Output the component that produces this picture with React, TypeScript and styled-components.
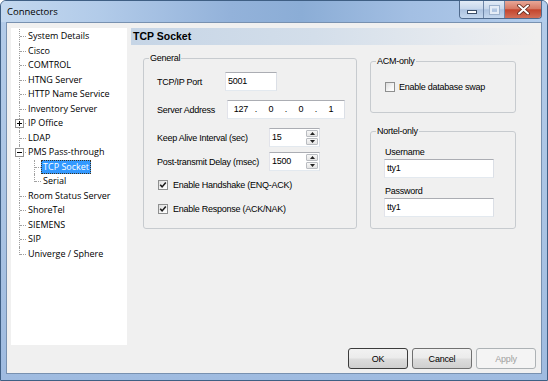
import styled, { createGlobalStyle } from 'styled-components'

const GlobalStyle = createGlobalStyle`
  html, body {
    margin: 0;
    padding: 0;
    background: #ffffff;
  }
  body {
    font-family: 'Liberation Sans', Arial, sans-serif;
  }
  * {
    box-sizing: border-box;
  }
`

interface ITreeNode {
  label: string
  toggle?: 'plus' | 'minus'
  selected?: boolean
  children?: ITreeNode[]
}

const tree: ITreeNode[] = [
  { label: 'System Details' },
  { label: 'Cisco' },
  { label: 'COMTROL' },
  { label: 'HTNG Server' },
  { label: 'HTTP Name Service' },
  { label: 'Inventory Server' },
  { label: 'IP Office', toggle: 'plus' },
  { label: 'LDAP' },
  {
    label: 'PMS Pass-through',
    toggle: 'minus',
    children: [{ label: 'TCP Socket', selected: true }, { label: 'Serial' }],
  },
  { label: 'Room Status Server' },
  { label: 'ShoreTel' },
  { label: 'SIEMENS' },
  { label: 'SIP' },
  { label: 'Univerge / Sphere' },
]

function TreeNodes({ nodes, nested }: { nodes: ITreeNode[]; nested?: boolean }) {
  return (
    <TreeList $nested={nested}>
      {nodes.map((node, index) => (
        <TreeItem key={node.label} $last={index === nodes.length - 1}>
          {node.toggle && <Toggle $plus={node.toggle === 'plus'} />}
          <TreeRow>
            <TreeLabel $selected={node.selected}>{node.label}</TreeLabel>
          </TreeRow>
          {node.children && <TreeNodes nodes={node.children} nested />}
        </TreeItem>
      ))}
    </TreeList>
  )
}

function CheckBox({ checked }: { checked?: boolean }) {
  return (
    <Box>
      {checked && (
        <svg width="8" height="8" viewBox="0 0 8 8">
          <path d="M1.2 3.8 L3.1 5.9 L6.8 1.6" fill="none" stroke="#1c1c1c" strokeWidth="1.6" />
        </svg>
      )}
    </Box>
  )
}

function Spin({ value }: { value: string }) {
  return (
    <SpinBox>
      <span>{value}</span>
      <SpinArrows>
        <SpinButton>
          <svg width="5" height="3" viewBox="0 0 5 3">
            <path d="M0 3 L2.5 0 L5 3 Z" fill="#222" />
          </svg>
        </SpinButton>
        <SpinButton>
          <svg width="5" height="3" viewBox="0 0 5 3">
            <path d="M0 0 L2.5 3 L5 0 Z" fill="#222" />
          </svg>
        </SpinButton>
      </SpinArrows>
    </SpinBox>
  )
}

export default function App() {
  return (
    <>
      <GlobalStyle />
      <Window>
        <TitleBar>
          <Title>Connectors</Title>
          <Caption>
            <CaptionButton $width={23}>
              <MinGlyph />
            </CaptionButton>
            <CaptionButton $width={21}>
              <MaxGlyph />
            </CaptionButton>
            <CaptionButton $width={37} $close>
              <svg width="13" height="11" viewBox="0 0 13 11">
                <path
                  d="M2 1.5 L11 9.5 M11 1.5 L2 9.5"
                  stroke="#5a2418"
                  strokeWidth="3.6"
                  strokeLinecap="round"
                />
                <path d="M2 1.5 L11 9.5 M11 1.5 L2 9.5" stroke="#ffffff" strokeWidth="2" strokeLinecap="round" />
              </svg>
            </CaptionButton>
          </Caption>
        </TitleBar>
        <Client>
          <Body>
            <Tree>
              <TreeNodes nodes={tree} />
            </Tree>
            <Panel>
              <Header>TCP Socket</Header>
              <Content>
                <Group $width={214}>
                  <Legend>General</Legend>
                  <GroupInner $pad={8}>
                    <FieldRow $top={8}>
                      <Label $width={68}>TCP/IP Port</Label>
                      <TextBox $width={52}>5001</TextBox>
                    </FieldRow>
                    <FieldRow $top={9}>
                      <Label $width={70}>Server Address</Label>
                      <IpBox>
                        <IpPart>127</IpPart>
                        <IpDot>.</IpDot>
                        <IpPart>0</IpPart>
                        <IpDot>.</IpDot>
                        <IpPart>0</IpPart>
                        <IpDot>.</IpDot>
                        <IpPart>1</IpPart>
                      </IpBox>
                    </FieldRow>
                    <FieldRow $top={9}>
                      <Label $width={112}>Keep Alive Interval (sec)</Label>
                      <Spin value="15" />
                    </FieldRow>
                    <FieldRow $top={5}>
                      <Label $width={112}>Post-transmit Delay (msec)</Label>
                      <Spin value="1500" />
                    </FieldRow>
                    <CheckRow $top={8} $indent={1}>
                      <CheckBox checked />
                      <span>Enable Handshake (ENQ-ACK)</span>
                    </CheckRow>
                    <CheckRow $top={12} $indent={1}>
                      <CheckBox checked />
                      <span>Enable Response (ACK/NAK)</span>
                    </CheckRow>
                  </GroupInner>
                </Group>
                <SideColumn>
                  <Group $width={146} $bottom={19}>
                    <Legend>ACM-only</Legend>
                    <GroupInner $pad={9}>
                      <CheckRow $top={14} $gap={4}>
                        <CheckBox />
                        <span>Enable database swap</span>
                      </CheckRow>
                    </GroupInner>
                  </Group>
                  <Group $width={146} $bottom={11} $top={12}>
                    <Legend>Nortel-only</Legend>
                    <GroupInner $pad={8}>
                      <StackLabel $top={9}>Username</StackLabel>
                      <TextBox $width={110} $top={1}>
                        tty1
                      </TextBox>
                      <StackLabel $top={7}>Password</StackLabel>
                      <TextBox $width={110} $top={1}>
                        tty1
                      </TextBox>
                    </GroupInner>
                  </Group>
                </SideColumn>
              </Content>
            </Panel>
          </Body>
          <ButtonRow>
            <Button $default>OK</Button>
            <Button>Cancel</Button>
            <Button disabled>Apply</Button>
          </ButtonRow>
        </Client>
      </Window>
    </>
  )
}

const Window = styled.div`
  width: 548px;
  height: 381px;
  display: flex;
  flex-direction: column;
  border: 1px solid #3f5f84;
  border-radius: 6px 6px 0 0;
  background: linear-gradient(180deg, #b4cce9 0%, #a9c3e3 60%, #9fbbe0 100%);
  overflow: hidden;
`

const TitleBar = styled.div`
  height: 21px;
  display: flex;
  justify-content: space-between;
  align-items: flex-start;
  padding-left: 6px;
  background: linear-gradient(
    90deg,
    #c3d8ef 0%,
    #b2cbe9 18%,
    #93b2da 42%,
    #8badd6 55%,
    #a3bfe3 75%,
    #b3cdec 100%
  );
`

const Title = styled.span`
  font-family: 'Open Sans', 'Noto Sans', sans-serif;
  font-size: 9.5px;
  line-height: 22px;
  color: #000000;
`

const Caption = styled.div`
  display: flex;
  margin-right: 5px;
  border: 1px solid #4f6a8d;
  border-top: none;
  border-radius: 0 0 4px 4px;
  overflow: hidden;
`

const CaptionButton = styled.div<{ $width: number; $close?: boolean }>`
  width: ${({ $width }) => $width}px;
  height: 17px;
  display: flex;
  align-items: center;
  justify-content: center;
  background: ${({ $close }) =>
    $close
      ? 'linear-gradient(180deg, #e8a797 0%, #d77b66 45%, #c4452d 52%, #d26f58 100%)'
      : 'linear-gradient(180deg, #e2ebf6 0%, #c8d8ec 45%, #adc3e0 52%, #c4d7ee 100%)'};
  & + & {
    border-left: 1px solid #6f87a8;
  }
`

const MinGlyph = styled.span`
  width: 10px;
  height: 4px;
  margin-top: 5px;
  background: #ffffff;
  border: 1px solid #3b4e68;
`

const MaxGlyph = styled.span`
  width: 9px;
  height: 8px;
  border: 2px solid #e4ecf6;
  outline: 1px solid #9db2cd;
`

const Client = styled.div`
  flex: 1;
  margin: 0 5px 6px 5px;
  border: 1px solid #7891b0;
  background: #f0f0f0;
  display: flex;
  flex-direction: column;
`

const Body = styled.div`
  display: flex;
  padding: 5px 4px 0 4px;
`

const Tree = styled.div`
  width: 116px;
  height: 317px;
  background: #ffffff;
  padding-top: 1px;
  font-family: 'Open Sans', 'Noto Sans', sans-serif;
  font-size: 9px;
  color: #000000;
`

const TreeList = styled.ul<{ $nested?: boolean }>`
  list-style: none;
  margin: 0;
  padding: 0 0 0 8px;
`

const TreeItem = styled.li<{ $last: boolean }>`
  position: relative;
  padding-left: 7px;

  &::before {
    content: '';
    position: absolute;
    left: 0;
    top: 0;
    height: ${({ $last }) => ($last ? '8px' : '100%')};
    border-left: 1px dotted #a0a0a0;
  }

  &::after {
    content: '';
    position: absolute;
    left: 1px;
    top: 7px;
    width: 6px;
    border-top: 1px dotted #a0a0a0;
  }
`

const Toggle = styled.span<{ $plus: boolean }>`
  position: absolute;
  left: -4px;
  top: 3px;
  width: 9px;
  height: 9px;
  border: 1px solid #919191;
  background: #ffffff;
  z-index: 1;

  &::before {
    content: '';
    position: absolute;
    left: 1px;
    top: 3px;
    width: 5px;
    height: 1px;
    background: #000000;
  }

  &::after {
    content: '';
    display: ${({ $plus }) => ($plus ? 'block' : 'none')};
    position: absolute;
    left: 3px;
    top: 1px;
    width: 1px;
    height: 5px;
    background: #000000;
  }
`

const TreeRow = styled.div`
  height: 14.5px;
  display: flex;
  align-items: center;
`

const TreeLabel = styled.span<{ $selected?: boolean }>`
  line-height: 12px;
  padding: 0 1px;
  border: 1px dotted ${({ $selected }) => ($selected ? '#3d3220' : 'transparent')};
  background: ${({ $selected }) => ($selected ? '#3399ff' : 'transparent')};
  color: ${({ $selected }) => ($selected ? '#ffffff' : '#000000')};
  white-space: nowrap;
`

const Panel = styled.div`
  flex: 1;
  margin-left: 4px;
  display: flex;
  flex-direction: column;
`

const Header = styled.div`
  height: 17px;
  line-height: 17px;
  padding-left: 2px;
  font-size: 10.5px;
  font-weight: bold;
  color: #000000;
  background: linear-gradient(90deg, #c6d5e6 0%, #d3deea 45%, #e6eaef 80%, #f0f0f0 100%);
`

const Content = styled.div`
  display: flex;
  align-items: flex-start;
  padding: 7px 0 0 12px;
`

const Group = styled.fieldset<{ $width: number; $bottom?: number; $top?: number }>`
  width: ${({ $width }) => $width}px;
  margin: ${({ $top }) => $top ?? 0}px 0 0 0;
  padding: 0 0 ${({ $bottom }) => $bottom ?? 13}px 5px;
  border: 1px solid #c7cbcf;
  border-radius: 3px;
  min-inline-size: 0;
`

const Legend = styled.legend`
  padding: 0 1px;
  font-size: 9px;
  letter-spacing: -0.25px;
  line-height: 12px;
  color: #000000;
`

const GroupInner = styled.div<{ $pad: number }>`
  display: flex;
  flex-direction: column;
  align-items: flex-start;
  padding-left: ${({ $pad }) => $pad}px;
  font-size: 9px;
  letter-spacing: -0.25px;
  color: #000000;
`

const FieldRow = styled.div<{ $top: number }>`
  display: flex;
  align-items: center;
  margin-top: ${({ $top }) => $top}px;
`

const Label = styled.span<{ $width: number }>`
  width: ${({ $width }) => $width}px;
  white-space: nowrap;
`

const TextBox = styled.div<{ $width: number; $top?: number }>`
  width: ${({ $width }) => $width}px;
  height: 19px;
  margin-top: ${({ $top }) => $top ?? 0}px;
  padding-left: 2px;
  line-height: 17px;
  background: #ffffff;
  border: 1px solid;
  border-color: #abadb3 #dbdfe6 #e3e9ef #e2e3ea;
`

const IpBox = styled(TextBox).attrs({ $width: 118 })`
  display: flex;
  padding-left: 0;
`

const IpPart = styled.span`
  flex: 1;
  text-align: center;
`

const IpDot = styled.span`
  width: 4px;
  text-align: center;
`

const SpinBox = styled.div`
  width: 51px;
  height: 19px;
  display: flex;
  justify-content: space-between;
  padding-left: 2px;
  line-height: 17px;
  background: #ffffff;
  border: 1px solid;
  border-color: #abadb3 #dbdfe6 #e3e9ef #e2e3ea;
`

const SpinArrows = styled.div`
  width: 13px;
  display: flex;
  flex-direction: column;
  gap: 1px;
  padding: 1px 1px 1px 0;
`

const SpinButton = styled.div`
  flex: 1;
  display: flex;
  align-items: center;
  justify-content: center;
  border: 1px solid #b9bcc1;
  border-radius: 1px;
  background: linear-gradient(180deg, #f7f7f7 0%, #e4e4e4 100%);
`

const CheckRow = styled.div<{ $top: number; $indent?: number; $gap?: number }>`
  display: flex;
  align-items: center;
  gap: ${({ $gap }) => $gap ?? 5}px;
  height: 12px;
  margin-top: ${({ $top }) => $top}px;
  margin-left: ${({ $indent }) => $indent ?? 0}px;
  white-space: nowrap;
`

const Box = styled.span`
  width: 10px;
  height: 10px;
  display: flex;
  align-items: center;
  justify-content: center;
  border: 1px solid #8e8f8f;
  background: linear-gradient(135deg, #dcdcdc 0%, #f6f6f6 60%, #ffffff 100%);
`

const StackLabel = styled.span<{ $top: number }>`
  margin: ${({ $top }) => $top}px 0 0 1px;
  line-height: 12px;
`

const SideColumn = styled.div`
  display: flex;
  flex-direction: column;
  margin: 3px 0 0 13px;
`

const ButtonRow = styled.div`
  display: flex;
  justify-content: flex-end;
  gap: 4px;
  margin-top: 3px;
  padding-right: 5px;
`

const Button = styled.button<{ $default?: boolean }>`
  width: 60px;
  height: 21px;
  padding: 0;
  font-family: 'Liberation Sans', Arial, sans-serif;
  font-size: 9px;
  letter-spacing: -0.2px;
  color: #000000;
  border: 1px solid ${({ $default }) => ($default ? '#3c3c3c' : '#707070')};
  border-radius: 3px;
  background: linear-gradient(180deg, #f2f2f2 0%, #ebebeb 48%, #dddddd 52%, #cfcfcf 100%);

  &:disabled {
    color: #a0a0a0;
    border-color: #adb2b5;
    background: #f4f4f4;
  }
`
